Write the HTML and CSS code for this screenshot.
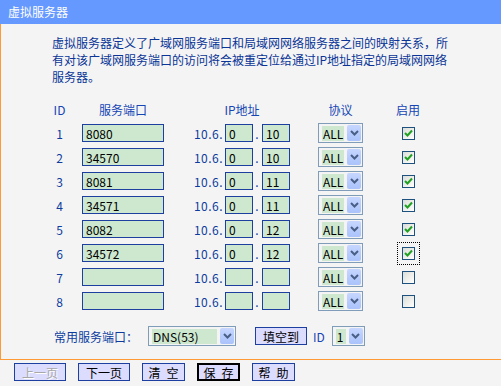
FILE: index.html
```html
<!DOCTYPE html>
<html lang="zh-CN">
<head>
  <meta charset="UTF-8" />
  <title>虚拟服务器</title>
  <link rel="stylesheet" href="styles.css">
</head>
<body>
  <div class="title">虚拟服务器</div>

  <div class="main">
    <p class="intro">虚拟服务器定义了广域网服务端口和局域网网络服务器之间的映射关系，所有对该广域网服务端口的访问将会被重定位给通过IP地址指定的局域网网络服务器。</p>

    <div class="grid">
      <div class="head">ID</div>
      <div class="head">服务端口</div>
      <div class="head">IP地址</div>
      <div class="head">协议</div>
      <div class="head">启用</div>

      <div>1</div>
      <input class="port" type="text" value="8080">
      <div class="ip">10.6.<input class="oct" type="text" value="0"><span class="dot">.</span><input class="oct" type="text" value="10"></div>
      <div class="select proto"><span class="val">ALL</span><span class="arrow"><svg width="9" height="6" viewBox="0 0 9 6"><path d="M1 1 L4.5 4.5 L8 1" fill="none" stroke="#4a5f86" stroke-width="2"/></svg></span></div>
      <span class="check on"><svg width="11" height="11" viewBox="0 0 11 11"><path d="M2 5 L4.5 7.5 L9 2.5" fill="none" stroke="#21a121" stroke-width="2"/></svg></span>

      <div>2</div>
      <input class="port" type="text" value="34570">
      <div class="ip">10.6.<input class="oct" type="text" value="0"><span class="dot">.</span><input class="oct" type="text" value="10"></div>
      <div class="select proto"><span class="val">ALL</span><span class="arrow"><svg width="9" height="6" viewBox="0 0 9 6"><path d="M1 1 L4.5 4.5 L8 1" fill="none" stroke="#4a5f86" stroke-width="2"/></svg></span></div>
      <span class="check on"><svg width="11" height="11" viewBox="0 0 11 11"><path d="M2 5 L4.5 7.5 L9 2.5" fill="none" stroke="#21a121" stroke-width="2"/></svg></span>

      <div>3</div>
      <input class="port" type="text" value="8081">
      <div class="ip">10.6.<input class="oct" type="text" value="0"><span class="dot">.</span><input class="oct" type="text" value="11"></div>
      <div class="select proto"><span class="val">ALL</span><span class="arrow"><svg width="9" height="6" viewBox="0 0 9 6"><path d="M1 1 L4.5 4.5 L8 1" fill="none" stroke="#4a5f86" stroke-width="2"/></svg></span></div>
      <span class="check on"><svg width="11" height="11" viewBox="0 0 11 11"><path d="M2 5 L4.5 7.5 L9 2.5" fill="none" stroke="#21a121" stroke-width="2"/></svg></span>

      <div>4</div>
      <input class="port" type="text" value="34571">
      <div class="ip">10.6.<input class="oct" type="text" value="0"><span class="dot">.</span><input class="oct" type="text" value="11"></div>
      <div class="select proto"><span class="val">ALL</span><span class="arrow"><svg width="9" height="6" viewBox="0 0 9 6"><path d="M1 1 L4.5 4.5 L8 1" fill="none" stroke="#4a5f86" stroke-width="2"/></svg></span></div>
      <span class="check on"><svg width="11" height="11" viewBox="0 0 11 11"><path d="M2 5 L4.5 7.5 L9 2.5" fill="none" stroke="#21a121" stroke-width="2"/></svg></span>

      <div>5</div>
      <input class="port" type="text" value="8082">
      <div class="ip">10.6.<input class="oct" type="text" value="0"><span class="dot">.</span><input class="oct" type="text" value="12"></div>
      <div class="select proto"><span class="val">ALL</span><span class="arrow"><svg width="9" height="6" viewBox="0 0 9 6"><path d="M1 1 L4.5 4.5 L8 1" fill="none" stroke="#4a5f86" stroke-width="2"/></svg></span></div>
      <span class="check on"><svg width="11" height="11" viewBox="0 0 11 11"><path d="M2 5 L4.5 7.5 L9 2.5" fill="none" stroke="#21a121" stroke-width="2"/></svg></span>

      <div>6</div>
      <input class="port" type="text" value="34572">
      <div class="ip">10.6.<input class="oct" type="text" value="0"><span class="dot">.</span><input class="oct" type="text" value="12"></div>
      <div class="select proto"><span class="val">ALL</span><span class="arrow"><svg width="9" height="6" viewBox="0 0 9 6"><path d="M1 1 L4.5 4.5 L8 1" fill="none" stroke="#4a5f86" stroke-width="2"/></svg></span></div>
      <span class="focus"><span class="check on"><svg width="11" height="11" viewBox="0 0 11 11"><path d="M2 5 L4.5 7.5 L9 2.5" fill="none" stroke="#21a121" stroke-width="2"/></svg></span></span>

      <div>7</div>
      <input class="port" type="text" value="">
      <div class="ip">10.6.<input class="oct" type="text" value=""><span class="dot">.</span><input class="oct" type="text" value=""></div>
      <div class="select proto"><span class="val">ALL</span><span class="arrow"><svg width="9" height="6" viewBox="0 0 9 6"><path d="M1 1 L4.5 4.5 L8 1" fill="none" stroke="#4a5f86" stroke-width="2"/></svg></span></div>
      <span class="check"></span>

      <div>8</div>
      <input class="port" type="text" value="">
      <div class="ip">10.6.<input class="oct" type="text" value=""><span class="dot">.</span><input class="oct" type="text" value=""></div>
      <div class="select proto"><span class="val">ALL</span><span class="arrow"><svg width="9" height="6" viewBox="0 0 9 6"><path d="M1 1 L4.5 4.5 L8 1" fill="none" stroke="#4a5f86" stroke-width="2"/></svg></span></div>
      <span class="check"></span>
    </div>

    <div class="common">
      <span>常用服务端口：</span>
      <div class="select dns"><span class="val">DNS(53)</span><span class="arrow"><svg width="9" height="6" viewBox="0 0 9 6"><path d="M1 1 L4.5 4.5 L8 1" fill="none" stroke="#4a5f86" stroke-width="2"/></svg></span></div>
      <button class="btn fill">填空到</button>
      <span class="idlabel">ID</span>
      <div class="select idsel"><span class="val">1</span><span class="arrow"><svg width="9" height="6" viewBox="0 0 9 6"><path d="M1 1 L4.5 4.5 L8 1" fill="none" stroke="#4a5f86" stroke-width="2"/></svg></span></div>
    </div>
  </div>

  <div class="foot">
    <button class="btn off">上一页</button>
    <button class="btn">下一页</button>
    <button class="btn short">清&ensp;空</button>
    <button class="btn short default">保&ensp;存</button>
    <button class="btn short">帮&ensp;助</button>
  </div>
</body>
</html>
```

FILE: styles.css
```css
body { margin: 0; background: #f4f4f4; font: 12px "Noto Sans CJK SC", sans-serif; color: #0d3c9e; }
.title { height: 24px; line-height: 24px; background: #6699ff; color: #fff; padding-left: 8px; }
.main { border-left: 1px solid #ff9933; border-bottom: 1px solid #ff9933; padding: 10px 0 13px 0; }
.intro { margin: 0 0 0 51px; width: 400px; line-height: 17px; color: #0a3596; }

.grid { display: grid; grid-template-columns: 39px 88px 150px 47px 88px; grid-auto-rows: 24px; align-items: center; justify-items: center; margin: 12px 0 0 39px; }
.head { color: #1546b4; }
input { font: 12px "Noto Sans CJK SC", sans-serif; color: #000; background: #cde8cf; border: 1px solid #1d3fa0; height: 18px; box-sizing: border-box; padding: 0 0 0 3px; margin: 0; }
.port { width: 82px; }
.ip { display: flex; align-items: center; letter-spacing: 0.5px; }
.oct { width: 28px; margin-left: 2px; letter-spacing: 0; }
.dot { width: 6px; text-align: center; margin-left: 1px; }

.select { display: flex; align-items: center; box-sizing: border-box; height: 20px; border: 1px solid #7f9db9; padding: 1px 1px 1px 3px; gap: 3px; color: #000; }
.select .val { flex: 1; background: #cde8cf; height: 15px; line-height: 15px; padding-left: 1px; }
.select .arrow { width: 14px; height: 16px; display: flex; align-items: center; justify-content: center; background: linear-gradient(#c6d6ff, #aac3fb); border-radius: 2px; }
.proto { width: 45px; }
.dns { width: 88px; }
.idsel { width: 33px; }

.check { display: flex; align-items: center; justify-content: center; width: 13px; height: 13px; box-sizing: border-box; border: 1px solid #1c5180; background: linear-gradient(135deg, #dcdcd7, #ffffff); }
.focus { outline: 1px dotted #000; padding: 4px; }

.common { display: flex; align-items: center; height: 20px; margin: 13px 0 0 53px; }
.dns { margin-left: 10px; }
.fill { width: 52px; height: 17px; margin-left: 19px; }
.idlabel { margin-left: 6px; color: #1546b4; }
.idsel { margin-left: 7px; }

.btn { font: 12px "Noto Sans CJK SC", sans-serif; color: #000; background: #dcdcff; border: 1px solid #1d3fa0; height: 18px; width: 52px; padding: 0; line-height: 15px; white-space: pre; }
.btn.short { width: 43px; }
.btn.default { border: 2px solid #000; }
.btn.off { color: #a8a8a8; text-shadow: 1px 1px 0 #fff; }
.foot { display: flex; gap: 12px; padding: 3px 14px; }
```
